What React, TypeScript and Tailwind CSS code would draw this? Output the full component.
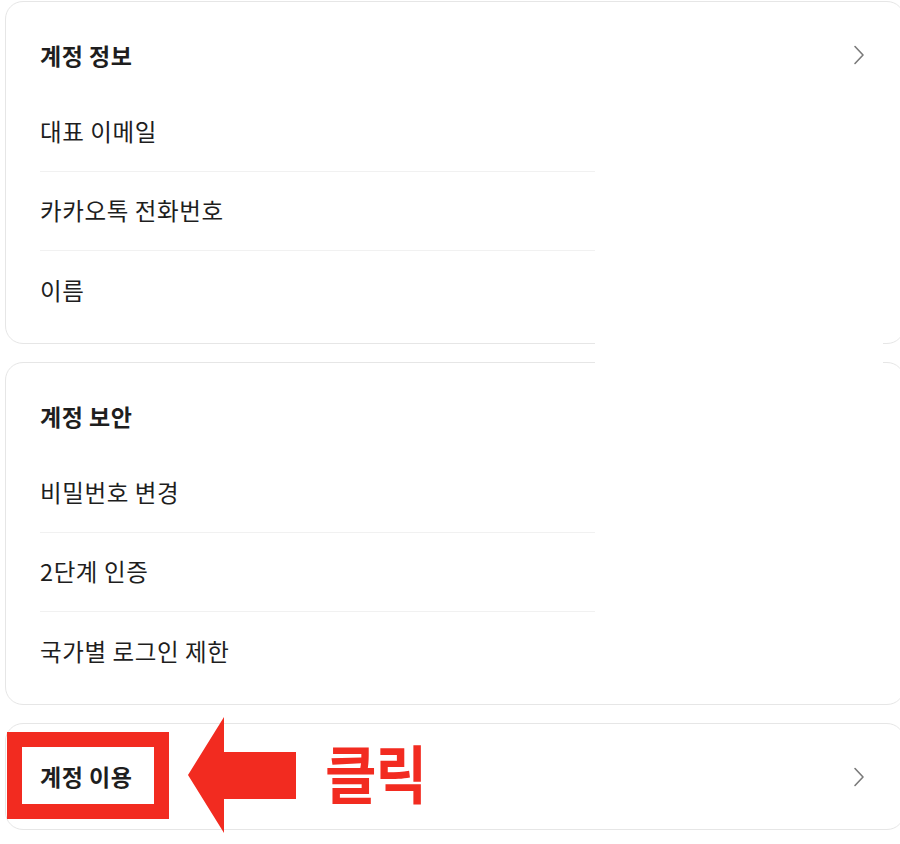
const font = "font-['Noto_Sans_CJK_KR','Noto_Sans',sans-serif]";

const Chevron = () => (
  <svg width="14" height="22" viewBox="0 0 14 22" fill="none" className="shrink-0">
    <path d="M3 2.5 L11 11 L3 19.5" stroke="#7a7a7a" strokeWidth="1.6" strokeLinecap="round" strokeLinejoin="round" />
  </svg>
);

const Row = ({ label, last }: { label: string; last?: boolean }) => (
  <div className={`flex h-[79px] w-[555px] items-center ${last ? '' : 'border-b border-[#f1f1f1]'}`}>
    <span className="text-[23.5px] tracking-[0.6px] text-[#1e1e1e]">{label}</span>
  </div>
);

const Section = ({ title, items, chevron }: { title: string; items: string[]; chevron?: boolean }) => (
  <div className="w-[900px] rounded-[18px] border border-[#e6e6e6] bg-white pl-[34px] pr-[38px] pt-[15px] pb-[13px]">
    <div className="flex h-[76px] items-center justify-between">
      <span className="text-[23px] font-bold tracking-[0.5px] text-[#1e1e1e]">{title}</span>
      {chevron && <Chevron />}
    </div>
    {items.map((it, i) => (
      <Row key={it} label={it} last={i === items.length - 1} />
    ))}
  </div>
);

export default function App() {
  return (
    <div className={`relative h-[844px] w-[900px] overflow-hidden bg-white ${font}`}>
      <div className="flex flex-col gap-[18px] pl-[5px] pt-[1px]">
        <Section title="계정 정보" chevron items={['대표 이메일', '카카오톡 전화번호', '이름']} />
        <Section title="계정 보안" items={['비밀번호 변경', '2단계 인증', '국가별 로그인 제한']} />
        <div className="flex h-[107px] w-[900px] items-center justify-between rounded-[18px] border border-[#e6e6e6] bg-white pl-[34px] pr-[38px]">
          <span className="text-[23px] font-bold tracking-[0.5px] text-[#1e1e1e]">계정 이용</span>
          <Chevron />
        </div>
      </div>

      {/* white patch covering the gap between first two cards */}
      <div className="absolute left-[595px] top-[337px] h-[32px] w-[288px] bg-white" />

      {/* red annotation */}
      <div className="absolute left-[7px] top-[732px] h-[87px] w-[162px] border-[15px] border-[#f22b20]" />
      <svg className="absolute left-[186px] top-[716px]" width="112" height="118" viewBox="0 0 112 118">
        <polygon points="2,59 38,1 38,36 110,36 110,83 38,83 38,117" fill="#f22b20" />
      </svg>
      <div className="absolute left-[325px] top-[735px] origin-top-left scale-y-[1.12] text-[56px] font-bold leading-[64px] tracking-[-1px] text-[#f22b20]">
        클릭
      </div>
    </div>
  );
}
